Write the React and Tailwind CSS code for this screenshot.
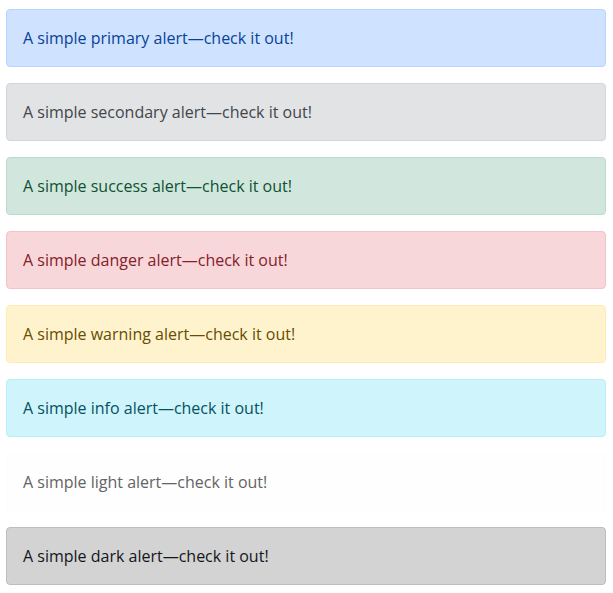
const alerts = [
  { name: "primary", cls: "bg-[#cfe2ff] border-[#b6d4fe] text-[#084298]" },
  { name: "secondary", cls: "bg-[#e2e3e5] border-[#d3d6d8] text-[#41464b]" },
  { name: "success", cls: "bg-[#d1e7dd] border-[#badbcc] text-[#0f5132]" },
  { name: "danger", cls: "bg-[#f8d7da] border-[#f5c2c7] text-[#842029]" },
  { name: "warning", cls: "bg-[#fff3cd] border-[#ffecb5] text-[#664d03]" },
  { name: "info", cls: "bg-[#cff4fc] border-[#b6effb] text-[#055160]" },
  { name: "light", cls: "bg-[#fefefe] border-[#fdfdfe] text-[#636464]" },
  { name: "dark", cls: "bg-[#d3d3d4] border-[#bcbebf] text-[#141619]" },
];

export default function App() {
  return (
    <div className="w-[613px] pt-[9px] pl-[6px] pr-[7px] flex flex-col gap-4 font-['Open_Sans',sans-serif] text-[16px] leading-6">
      {alerts.map((a) => (
        <div key={a.name} className={`border rounded-[4px] px-4 py-4 ${a.cls}`}>
          A simple {a.name} alert—check it out!
        </div>
      ))}
    </div>
  );
}
